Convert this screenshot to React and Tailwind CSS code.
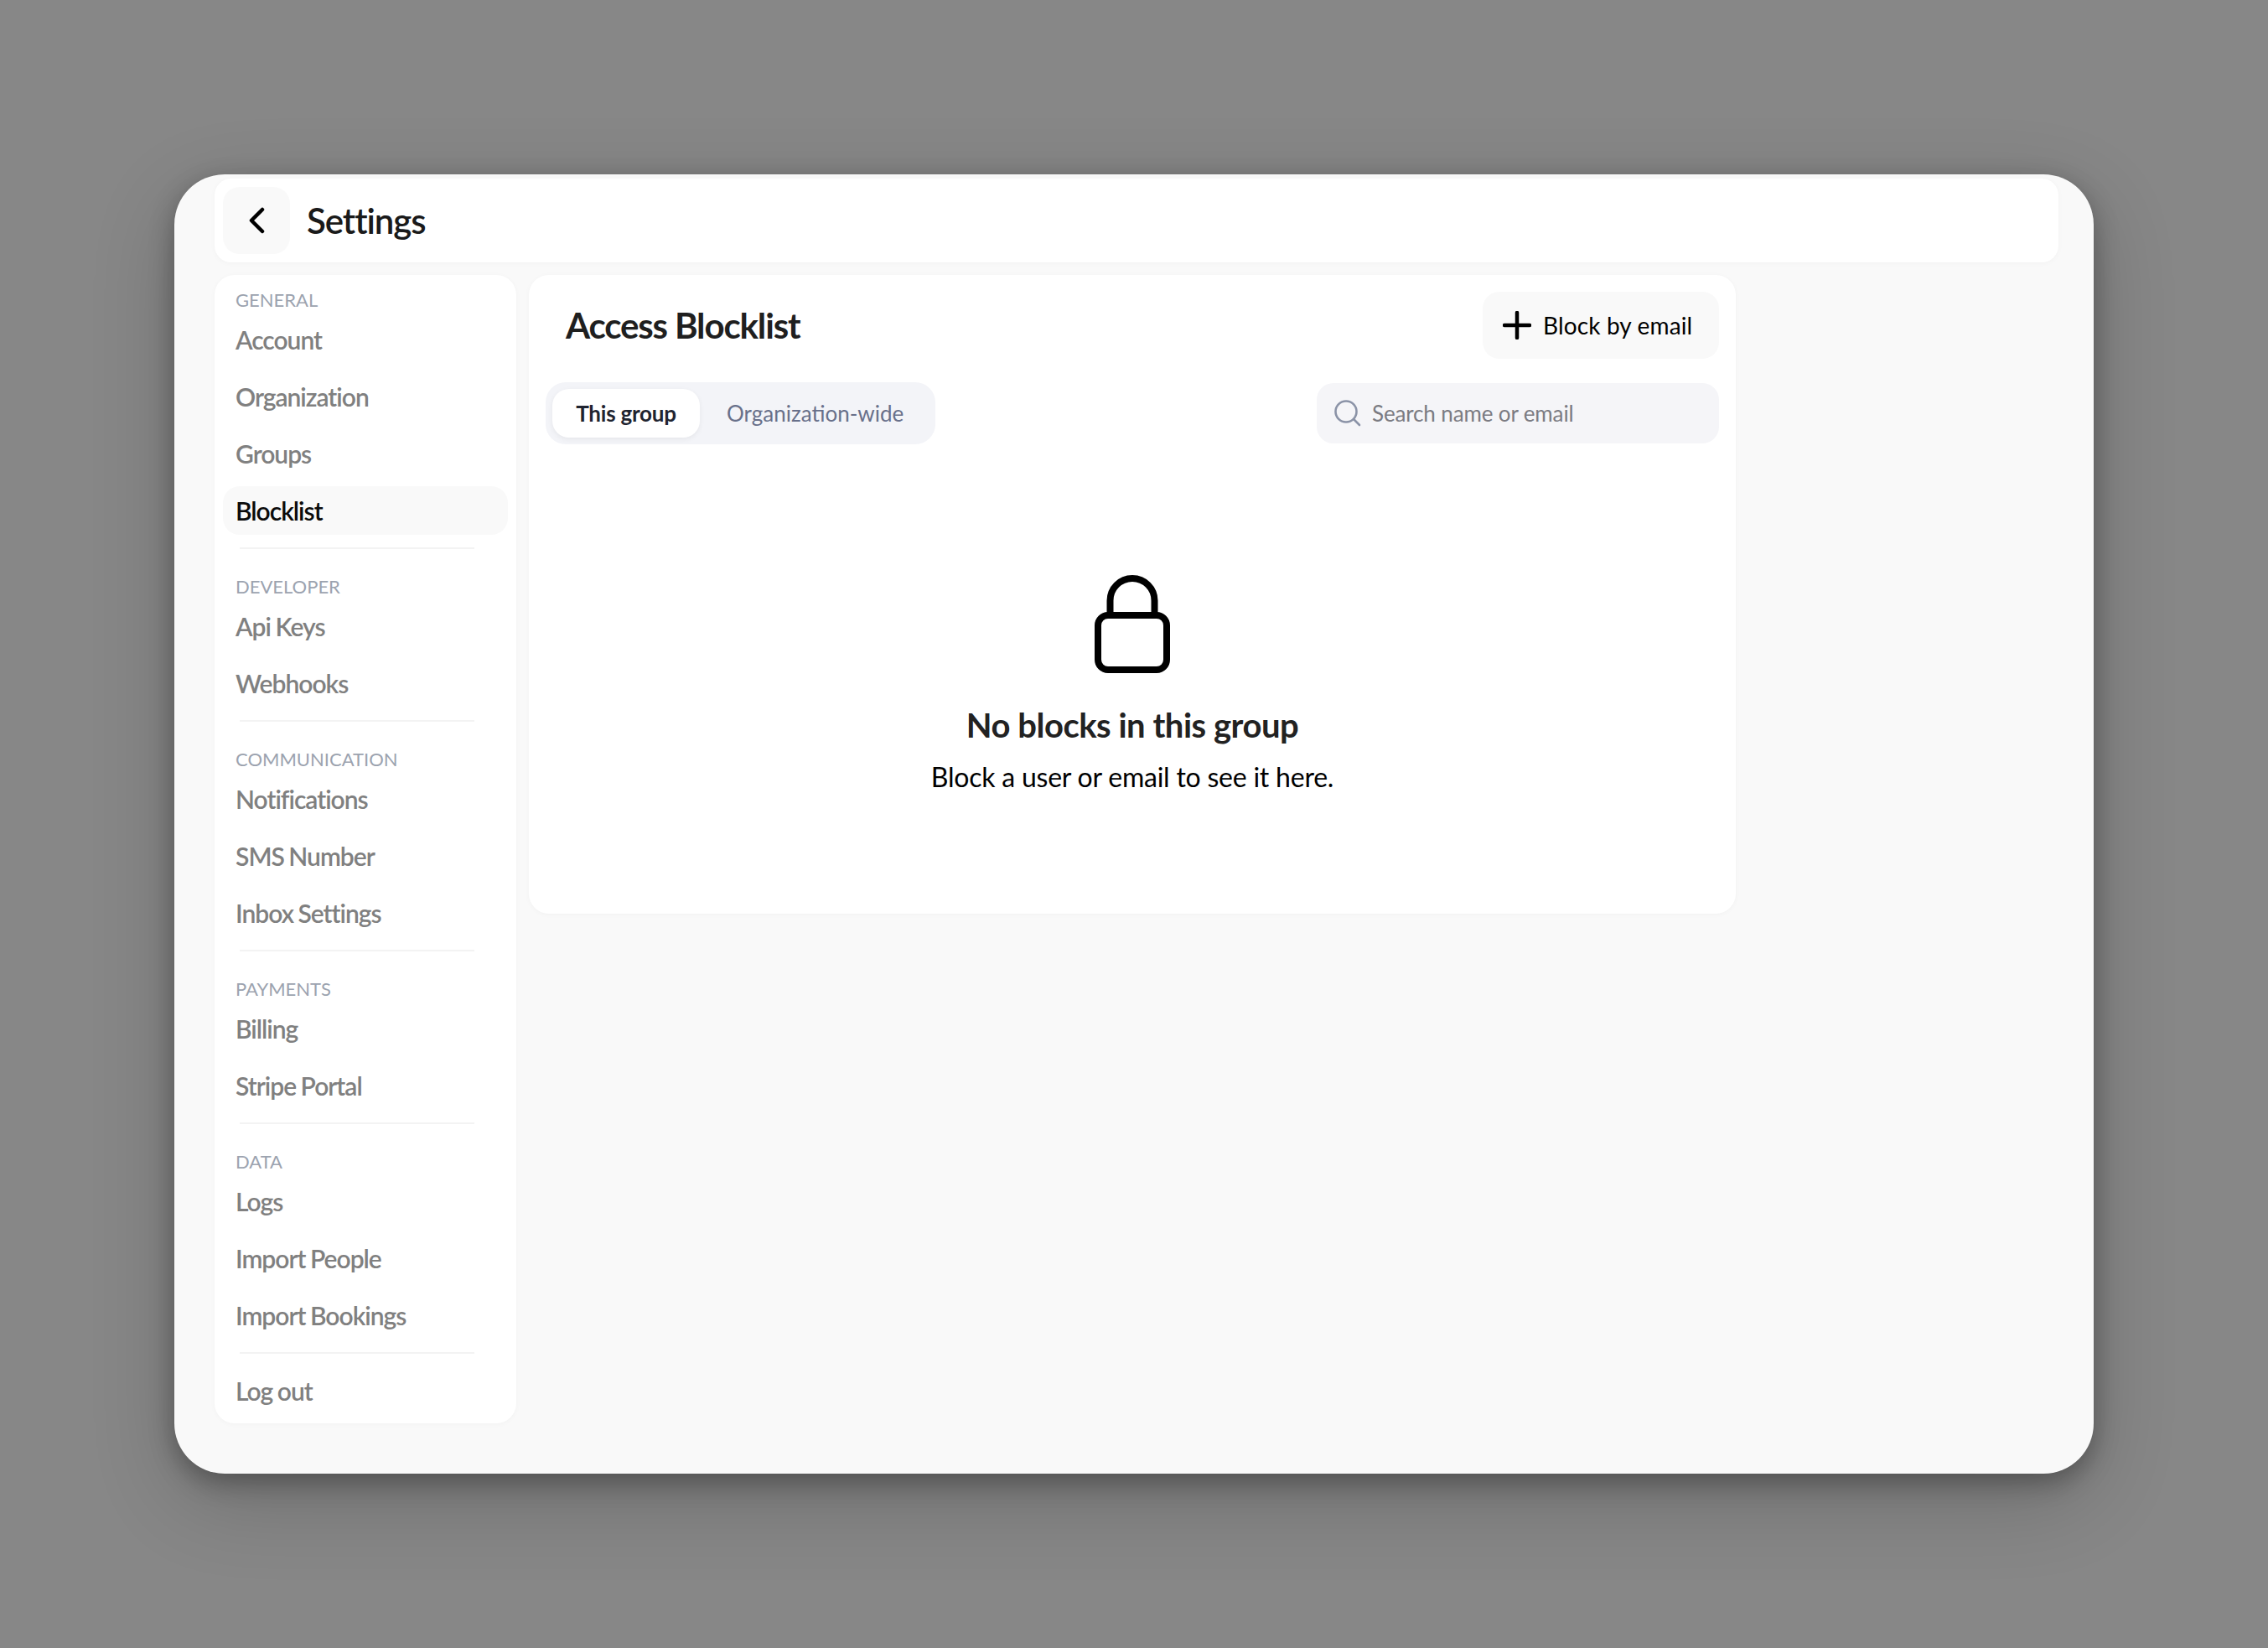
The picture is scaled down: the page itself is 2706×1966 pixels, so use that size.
const sections = [
  { label: 'GENERAL', items: ['Account', 'Organization', 'Groups', 'Blocklist'] },
  { label: 'DEVELOPER', items: ['Api Keys', 'Webhooks'] },
  { label: 'COMMUNICATION', items: ['Notifications', 'SMS Number', 'Inbox Settings'] },
  { label: 'PAYMENTS', items: ['Billing', 'Stripe Portal'] },
  { label: 'DATA', items: ['Logs', 'Import People', 'Import Bookings'] },
]

function NavItem({ name }) {
  const active = name === 'Blocklist'
  return (
    <div
      className={`h-[58px] flex items-center pl-[15px] rounded-[20px] text-[30px] font-semibold tracking-[-0.033em] [word-spacing:-1px] ${
        active ? 'bg-[#f9f9f9] text-[#0b0b0b]' : 'text-[#808080]'
      }`}
    >
      {name}
    </div>
  )
}

function Sidebar() {
  return (
    <aside className="w-[360px] h-[1370px] shrink-0 bg-white rounded-[24px] shadow-[0_1px_6px_rgba(0,0,0,0.03)] pt-[16px] px-[10px]">
      {sections.map((s, i) => (
        <div key={s.label} className={i > 0 ? 'mt-[31px]' : ''}>
          <div className="h-[28px] leading-[28px] pl-[15px] text-[22px] text-[#9ca3af]">{s.label}</div>
          <div className="mt-[4px] flex flex-col gap-[10px]">
            {s.items.map((name) => (
              <NavItem key={name} name={name} />
            ))}
          </div>
          <div className="mt-[15px] ml-[20px] w-[280px] h-[2px] bg-[#f3f3f3]" />
        </div>
      ))}
      <div className="mt-[15px]">
        <NavItem name="Log out" />
      </div>
    </aside>
  )
}

function LockIcon() {
  return (
    <svg width="90" height="117" viewBox="0 0 90 117" fill="none" stroke="#000" strokeWidth="8">
      <rect x="4" y="48" width="82" height="65" rx="12" />
      <path d="M18.5 48V30.5a26.5 26.5 0 0 1 53 0V48" />
    </svg>
  )
}

export default function App() {
  return (
    <div className="min-h-screen bg-[#878787] flex items-center justify-center [font-family:Lato,'Liberation_Sans',sans-serif]">
      <div className="w-[2290px] h-[1550px] bg-[#f9f9f9] rounded-[60px] shadow-[0_10px_30px_rgba(0,0,0,0.3),0_30px_100px_rgba(0,0,0,0.2)] pl-[48px] pr-[42px] pt-[5px]">
        {/* header */}
        <div className="h-[100px] bg-white rounded-[20px] shadow-[0_1px_6px_rgba(0,0,0,0.03)] flex items-center pl-[10px]">
          <button className="w-[80px] h-[80px] rounded-[20px] bg-[#f9f9f9] flex items-center justify-center">
            <svg width="24" height="34" viewBox="0 0 24 34" fill="none" stroke="#000" strokeWidth="4.5" strokeLinecap="round" strokeLinejoin="round">
              <path d="M19 4 6 17l13 13" />
            </svg>
          </button>
          <h1 className="ml-[20px] text-[42px] font-semibold tracking-[-0.025em] text-[#1a1a1a]">Settings</h1>
        </div>

        <div className="mt-[15px] flex gap-[15px]">
          <Sidebar />

          <main className="w-[1440px] h-[762px] bg-white rounded-[24px] shadow-[0_1px_6px_rgba(0,0,0,0.03)] pt-[20px] px-[20px]">
            <div className="flex items-center justify-between">
              <h2 className="ml-[24px] text-[42px] font-bold tracking-[-0.027em] text-[#1f1f1f]">Access Blocklist</h2>
              <button className="w-[282px] h-[80px] rounded-[20px] bg-[#f9f9f9] flex items-center pl-[24px] text-[28px] tracking-[0.005em] text-black">
                <svg width="34" height="34" viewBox="0 0 34 34" fill="none" stroke="#000" strokeWidth="4.5" strokeLinecap="round">
                  <path d="M17 2v30M2 17h30" />
                </svg>
                <span className="ml-[14px]">Block by email</span>
              </button>
            </div>

            <div className="mt-[28px] flex items-center justify-between">
              <div className="h-[74px] w-[465px] rounded-[24px] bg-[#f3f4f8] flex items-center pl-[8px]">
                <div className="w-[176px] h-[58px] rounded-[20px] bg-white shadow-[0_2px_6px_rgba(0,0,0,0.06)] flex items-center justify-center text-[26px] font-bold tracking-[-0.008em] text-[#1f2430]">
                  This group
                </div>
                <div className="ml-[32px] text-[26px] text-[#68708a]">Organization-wide</div>
              </div>
              <div className="w-[480px] h-[72px] rounded-[20px] bg-[#f5f5f8] flex items-center pl-[21px]">
                <svg width="32" height="32" viewBox="0 0 32 32" fill="none" stroke="#8b93a7" strokeWidth="2.6" strokeLinecap="round">
                  <circle cx="14" cy="14" r="12.5" />
                  <path d="M23.5 23.5 30 30" />
                </svg>
                <span className="ml-[13px] text-[26px] tracking-[-0.005em] text-[#7b7b82]">Search name or email</span>
              </div>
            </div>

            <div className="mt-[156px] flex flex-col items-center">
              <LockIcon />
              <h3 className="mt-[36px] text-[40px] leading-[52px] font-bold tracking-[-0.012em] text-[#222222]">No blocks in this group</h3>
              <p className="mt-[14px] text-[32px] leading-[44px] tracking-[-0.007em] text-black">Block a user or email to see it here.</p>
            </div>
          </main>
        </div>
      </div>
    </div>
  )
}
